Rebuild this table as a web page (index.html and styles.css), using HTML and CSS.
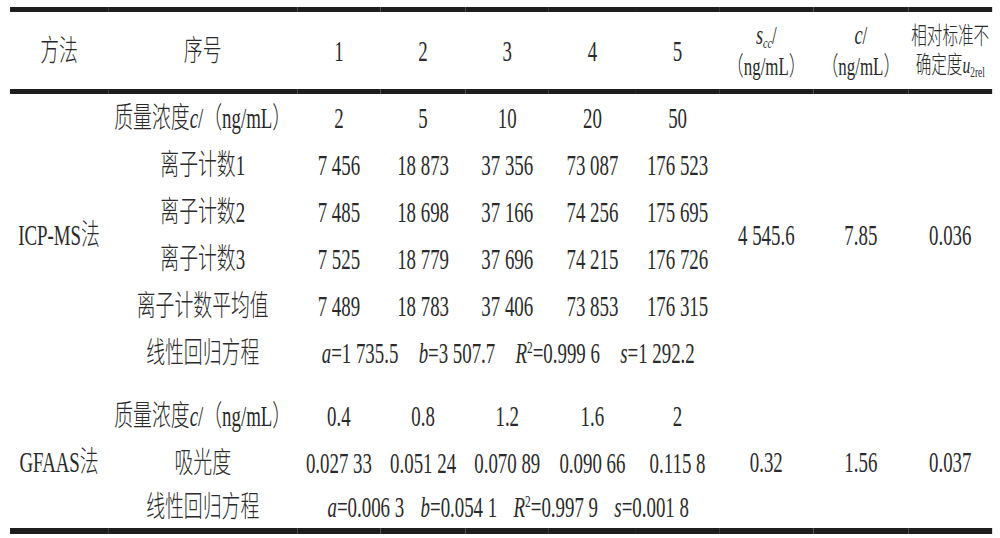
FILE: index.html
```html
<!DOCTYPE html>
<html>
<head>
<meta charset="utf-8" />
<title>ICP-MS法与GFAAS法</title>
<link rel="stylesheet" href="styles.css">
</head>
<body>
<div class="page">
<table class="data">
<colgroup>
<col class="c_method" /><col class="c_item" />
<col class="c_n1" /><col class="c_n2" /><col class="c_n3" /><col class="c_n4" /><col class="c_n5" />
<col class="c_s" /><col class="c_c" /><col class="c_u" />
</colgroup>
<thead>
<tr>
<th>方法</th>
<th>序号</th>
<th>1</th><th>2</th><th>3</th><th>4</th><th>5</th>
<th class="unit"><i class="big">s</i><sub><i>cc</i></sub>/<br />（ng/mL）</th>
<th class="unit"><i class="big">c</i>/<br />（ng/mL）</th>
<th class="unit narrow">相对标准不<br />确定度<i>u</i><sub>2rel</sub></th>
</tr>
</thead>
<tbody class="icp">
<tr>
<td rowspan="6" class="method">ICP-MS法</td>
<td>质量浓度<i>c</i>/（ng/mL）</td>
<td>2</td><td>5</td><td>10</td><td>20</td><td>50</td>
<td rowspan="6">4 545.6</td>
<td rowspan="6">7.85</td>
<td rowspan="6">0.036</td>
</tr>
<tr><td>离子计数1</td><td>7 456</td><td>18 873</td><td>37 356</td><td>73 087</td><td>176 523</td></tr>
<tr><td>离子计数2</td><td>7 485</td><td>18 698</td><td>37 166</td><td>74 256</td><td>175 695</td></tr>
<tr><td>离子计数3</td><td>7 525</td><td>18 779</td><td>37 696</td><td>74 215</td><td>176 726</td></tr>
<tr><td>离子计数平均值</td><td>7 489</td><td>18 783</td><td>37 406</td><td>73 853</td><td>176 315</td></tr>
<tr>
<td>线性回归方程</td>
<td colspan="5">
<span class="term"><i>a</i>=1 735.5</span>
<span class="term"><i>b</i>=3 507.7</span>
<span class="term"><i>R</i><sup>2</sup>=0.999 6</span>
<span class="term"><i>s</i>=1 292.2</span>
</td>
</tr>
</tbody>
<tbody class="gf">
<tr class="first">
<td rowspan="3" class="method span">GFAAS法</td>
<td>质量浓度<i>c</i>/（ng/mL）</td>
<td>0.4</td><td>0.8</td><td>1.2</td><td>1.6</td><td>2</td>
<td rowspan="3" class="span">0.32</td>
<td rowspan="3" class="span">1.56</td>
<td rowspan="3" class="span">0.037</td>
</tr>
<tr><td>吸光度</td><td>0.027 33</td><td>0.051 24</td><td>0.070 89</td><td>0.090 66</td><td>0.115 8</td></tr>
<tr class="last">
<td>线性回归方程</td>
<td colspan="5">
<span class="term"><i>a</i>=0.006 3</span>
<span class="term"><i>b</i>=0.054 1</span>
<span class="term"><i>R</i><sup>2</sup>=0.997 9</span>
<span class="term"><i>s</i>=0.001 8</span>
</td>
</tr>
</tbody>
</table>
</div>
</body>
</html>
```

FILE: styles.css
```css
body {
margin: 0;
overflow: hidden;
background: #fff; }
.page {
padding: 7px 0 0 10px; }
/* le scan est tassé en largeur : on garde la mise en page large puis on la resserre */
.data {
width: 1511px;
table-layout: fixed;
border-collapse: collapse;
transform: scaleX(0.65);
transform-origin: 0 0;
font-family: "Liberation Serif", "Noto Sans CJK SC", serif;
font-size: 29px;
font-weight: 300;
color: #2a2a2a;
border-bottom: 6px solid #1e1e1e; }
.c_method { width: 151px; }
.c_item { width: 291px; }
.c_n1 { width: 128px; }
.c_n2 { width: 131px; }
.c_n3 { width: 128px; }
.c_n4 { width: 134px; }
.c_n5 { width: 128px; }
.c_s { width: 145px; }
.c_c { width: 146px; }
.c_u { width: 129px; }
th, td {
padding: 0;
text-align: center;
vertical-align: middle;
font-weight: 300;
white-space: nowrap;
line-height: 40px; }
thead th {
height: 77px;
border-top: 5px solid #1e1e1e;
border-bottom: 5px solid #1e1e1e; }
th.unit {
font-size: 26px;
line-height: 31px; }
th.narrow {
font-size: 24px;
line-height: 29px; }
.big {
font-size: 28px;
line-height: 0; }
sub, sup {
font-size: 0.6em;
line-height: 0; }
sub { vertical-align: -0.25em; }
sup { vertical-align: 0.6em; }
.icp td { height: 47px; }
.gf .first td {
height: 60px;
vertical-align: bottom;
padding-bottom: 3px; }
.gf .first td.span {
vertical-align: middle;
padding: 19px 0 0 0; }
.gf tr td { height: 47px; }
.gf .last td { height: 42px; }
.icp .term { margin: 0 12px; }
.gf .term { margin: 0 9px; }
```
